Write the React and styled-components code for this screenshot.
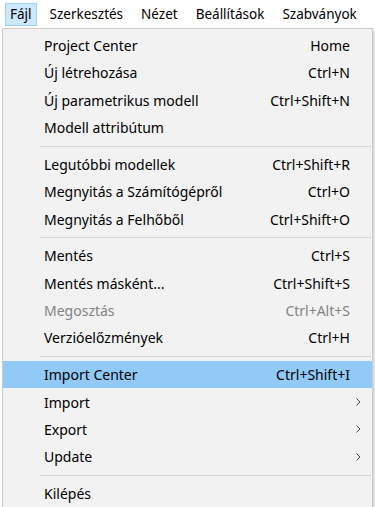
import React from 'react';
import styled, { createGlobalStyle } from 'styled-components';

const GlobalStyle = createGlobalStyle`
  html, body {
    margin: 0;
    padding: 0;
    background: #ffffff;
  }
  body {
    font-family: "Noto Sans", "Open Sans", sans-serif;
    color: #000;
  }
`;

const Page = styled.div`
  width: 375px;
  height: 507px;
  overflow: hidden;
  background: #ffffff;
`;

const MenuBar = styled.div`
  display: flex;
  align-items: center;
  height: 28px;
  padding-left: 5px;
  gap: 8px;
  font-size: 13.5px;
`;

const BarItem = styled.div`
  height: 21px;
  display: flex;
  align-items: center;
  padding: 0 4px;
  border: 1px solid ${({ active }) => (active ? '#99d1ff' : 'transparent')};
  background: ${({ active }) => (active ? '#cce8ff' : 'transparent')};
`;

const Panel = styled.div`
  margin-left: 2px;
  width: 369px;
  border: 1px solid #cccccc;
  background: #f2f2f2;
  padding: 3px 0;
  box-shadow: 2px 2px 3px rgba(0, 0, 0, 0.18);
  font-size: 14px;
`;

const Row = styled.div`
  display: flex;
  align-items: center;
  height: 27.33px;
  padding: 0 22px 0 41px;
  background: ${({ hot }) => (hot ? '#91c9f7' : 'transparent')};
  color: ${({ disabled }) => (disabled ? '#838383' : '#000')};
`;

const Label = styled.span`
  flex: 1;
  white-space: nowrap;
`;

const Shortcut = styled.span`
  white-space: nowrap;
`;

const Arrow = styled.span`
  display: flex;
  align-items: center;
  margin-right: -12px;
`;

const Separator = styled.div`
  height: 9.5px;
  display: flex;
  align-items: center;
  padding: 0 1px 0 37px;
  &::after {
    content: '';
    flex: 1;
    height: 1px;
    background: #d5d5d5;
  }
`;

const groups = [
  [
    ['Project Center', 'Home'],
    ['Új létrehozása', 'Ctrl+N'],
    ['Új parametrikus modell', 'Ctrl+Shift+N'],
    ['Modell attribútum', ''],
  ],
  [
    ['Legutóbbi modellek', 'Ctrl+Shift+R'],
    ['Megnyitás a Számítógépről', 'Ctrl+O'],
    ['Megnyitás a Felhőből', 'Ctrl+Shift+O'],
  ],
  [
    ['Mentés', 'Ctrl+S'],
    ['Mentés másként...', 'Ctrl+Shift+S'],
    ['Megosztás', 'Ctrl+Alt+S', { disabled: true }],
    ['Verzióelőzmények', 'Ctrl+H'],
  ],
  [
    ['Import Center', 'Ctrl+Shift+I', { hot: true }],
    ['Import', '', { sub: true }],
    ['Export', '', { sub: true }],
    ['Update', '', { sub: true }],
  ],
  [['Kilépés', '']],
];

const Chevron = () => (
  <svg width="8" height="8" viewBox="0 0 8 8">
    <path d="M2.5 0.5 L6 4 L2.5 7.5" fill="none" stroke="#444" strokeWidth="1" />
  </svg>
);

export default function App() {
  return (
    <Page>
      <GlobalStyle />
      <MenuBar>
        <BarItem active>Fájl</BarItem>
        <BarItem>Szerkesztés</BarItem>
        <BarItem>Nézet</BarItem>
        <BarItem>Beállítások</BarItem>
        <BarItem>Szabványok</BarItem>
      </MenuBar>
      <Panel>
        {groups.map((items, gi) => (
          <React.Fragment key={gi}>
            {gi > 0 && <Separator />}
            {items.map(([label, key, opts = {}]) => (
              <Row key={label} hot={opts.hot} disabled={opts.disabled}>
                <Label>{label}</Label>
                {key && <Shortcut>{key}</Shortcut>}
                {opts.sub && (
                  <Arrow>
                    <Chevron />
                  </Arrow>
                )}
              </Row>
            ))}
          </React.Fragment>
        ))}
      </Panel>
    </Page>
  );
}
